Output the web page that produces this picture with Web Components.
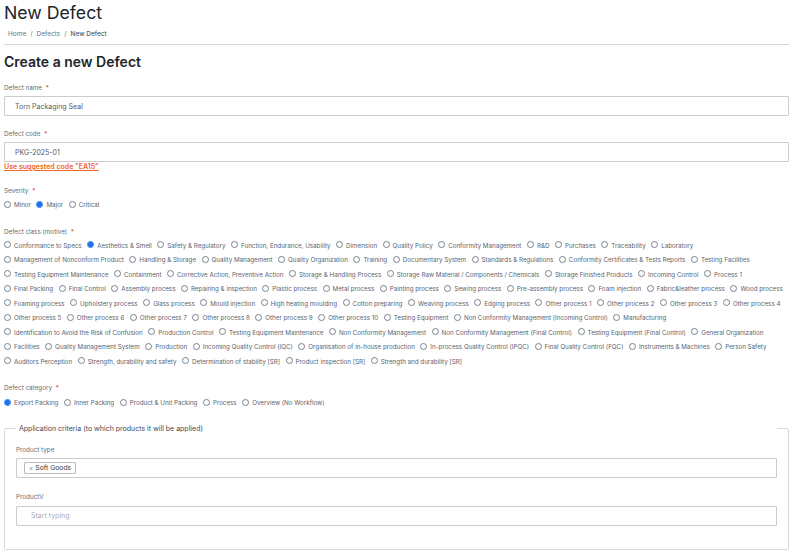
<!DOCTYPE html>
<html lang="en"><head><meta charset="utf-8"><title>New Defect</title>
<style>
html,body{margin:0;padding:0;background:#fff;height:556px;overflow:hidden}
body{font-family:Inter,"Liberation Sans",sans-serif;color:#495057}
</style></head><body>
<x-page>
  <x-head title-text="New Defect" slot="head"></x-head>
  <h-title>Create a new Defect</h-title>
  <x-field label="Defect name" required style="--top:13px"><x-input value="Torn Packaging Seal"></x-input></x-field>
  <x-field label="Defect code" required style="--top:13px"><x-input value="PKG-2025-01"></x-input><x-suggest>Use suggested code "EA15"</x-suggest></x-field>
  <x-field label="Severity" required style="--top:15px"><x-radios name="sev" items="Minor|*Major|Critical"></x-radios></x-field>
  <x-field label="Defect class (motive)" required style="--top:14px"><x-radios name="cls" items="Conformance to Specs|*Aesthetics &amp; Smell|Safety &amp; Regulatory|Function, Endurance, Usability|Dimension|Quality Policy|Conformity Management|R&amp;D|Purchases|Traceability|Laboratory|Management of Nonconform Product|Handling &amp; Storage|Quality Management|Quality Organization|Training|Documentary System|Standards &amp; Regulations|Conformity Certificates &amp; Tests Reports|Testing Facilities|Testing Equipment Maintenance|Containment|Corrective Action, Preventive Action|Storage &amp; Handling Process|Storage Raw Material / Components / Chemicals|Storage Finished Products|Incoming Control|Process 1|Final Packing|Final Control|Assembly process|Repairing &amp; inspection|Plastic process|Metal process|Painting process|Sewing process|Pre-assembly process|Foam injection|Fabric&amp;leather process|Wood process|Foaming process|Upholstery process|Glass process|Mould injection|High heating moulding|Cotton preparing|Weaving process|Edging process|Other process 1|Other process 2|Other process 3|Other process 4|Other process 5|Other process 6|Other process 7|Other process 8|Other process 9|Other process 10|Testing Equipment|Non Conformity Management (Incoming Control)|Manufacturing|Identification to Avoid the Risk of Confusion|Production Control|Testing Equipment Maintenance|Non Conformity Management|Non Conformity Management (Final Control)|Testing Equipment (Final Control)|General Organization|Facilities|Quality Management System|Production|Incoming Quality Control (IQC)|Organisation of in-house production|In-process Quality Control (IPQC)|Final Quality Control (FQC)|Instruments &amp; Machines|Person Safety|Auditors Perception|Strength, durability and safety|Determination of stability [SR]|Product inspection [SR]|Strength and durability [SR]"></x-radios></x-field>
  <x-field label="Defect category" required style="--top:14px;--gap:4px"><x-radios name="cat" items="*Export Packing|Inner Packing|Product &amp; Unit Packing|Process|Overview (No Workflow)"></x-radios></x-field>
  <x-criteria legend="Application criteria (to which products it will be applied)">
    <x-field label="Product type" style="--top:11px"><x-input chip="Soft Goods"></x-input></x-field>
    <x-field label="ProductV" style="--top:14px;--gap:4px"><x-input placeholder="Start typing"></x-input></x-field>
  </x-criteria>
</x-page>
<script>
const def=(n,css,html)=>customElements.define(n,class extends HTMLElement{
  connectedCallback(){ if(this.shadowRoot) return; const s=this.attachShadow({mode:'open'});
    s.innerHTML='<style>'+css+'</style>'+(typeof html==='function'?html(this):html); }
});
const esc=t=>String(t).replace(/&/g,'&amp;').replace(/</g,'&lt;').replace(/"/g,'&quot;');
def('x-page',':host{display:block;padding:0 3px 0 4px}','<slot name="head"></slot><slot></slot>');
def('x-head',`:host{display:block}
 h1{margin:0;font:400 17.7px/24px Inter,sans-serif;color:#212529;padding-top:1px}
 nav{display:flex;gap:4px;padding:4px 0 0 4px;font-size:6.5px;line-height:11px;color:#6c757d}
 b{font-weight:400;color:#343a40}
 hr{margin:4px 0 0;border:0;border-top:1px solid #d5d5d5}`,
 e=>`<h1>${esc(e.getAttribute('title-text'))}</h1><nav><span>Home</span><span>/</span><span>Defects</span><span>/</span><b>New Defect</b></nav><hr>`);
def('h-title',`:host{display:block;font:600 14px/17px Inter,sans-serif;color:#212529;padding-top:8px}`,'<slot></slot>');
def('x-field',`:host{display:block;padding-top:var(--top,14px)}
 label{display:block;font-size:6.3px;line-height:10px;color:#666c73;margin-bottom:var(--gap,3px)}
 i{font-style:normal;color:#e02424;margin-left:2px}`,
 e=>`<label>${esc(e.getAttribute('label'))}${e.hasAttribute('required')?' <i>*</i>':''}</label><slot></slot>`);
def('x-input',`:host{display:flex;box-sizing:border-box;height:20px;border:1px solid #ccc;border-radius:1px;background:#fff;align-items:center;padding-left:10px;font-size:7px;color:#555c64}
 .ph{color:#a8adb3;padding-left:4px}
 .chip{display:flex;align-items:center;gap:2px;height:12px;box-sizing:border-box;border:1px solid #bbb;border-radius:1px;padding:0 4px;margin-left:-3px;color:#343a40;font-size:6.8px}
 .chip s{text-decoration:none;color:#888;font-size:6.5px}`,
 e=>e.getAttribute('chip')?`<span class="chip"><s>×</s>${esc(e.getAttribute('chip'))}</span>`:e.getAttribute('placeholder')?`<span class="ph">${esc(e.getAttribute('placeholder'))}</span>`:`<span>${esc(e.getAttribute('value'))}</span>`);
def('x-suggest',`:host{display:block;font-size:7px;line-height:9px;font-weight:600;color:#f0641e;text-decoration:underline}`,'<slot></slot>');
def('x-radios',`:host{display:flex;flex-wrap:wrap;margin-top:-1px}
 label{display:inline-flex;align-items:center;gap:3px;margin-right:5.5px;line-height:14.5px;height:14.5px;font-size:6.24px;color:#5a6470}
 input{appearance:none;margin:0 0 2px;width:7px;height:7px;border:.6px solid #7a818b;border-radius:50%;background:#fff;box-sizing:border-box}
 input:checked{border-color:#1a73e8;background:radial-gradient(circle,#1a73e8 0 2.2px,#fff 2.6px)}`,
 e=>e.getAttribute('items').split('|').map(t=>{const c=t[0]==='*';const x=c?t.slice(1):t;
   return `<label><input type="radio" name="${e.getAttribute('name')}"${c?' checked':''}>${esc(x)}</label>`}).join(''));
def('x-criteria',`:host{display:block;margin-top:13px}
 fieldset{margin:0;box-sizing:border-box;height:126px;border:1px solid #d9d9d9;border-radius:2px;padding:0 11px;min-width:0}
 legend{font-size:7px;line-height:10px;padding:0 3px;width:100%;box-sizing:border-box;color:#3f4a58}`,
 e=>`<fieldset><legend>${esc(e.getAttribute('legend'))}</legend><slot></slot></fieldset>`);
</script></body></html>
